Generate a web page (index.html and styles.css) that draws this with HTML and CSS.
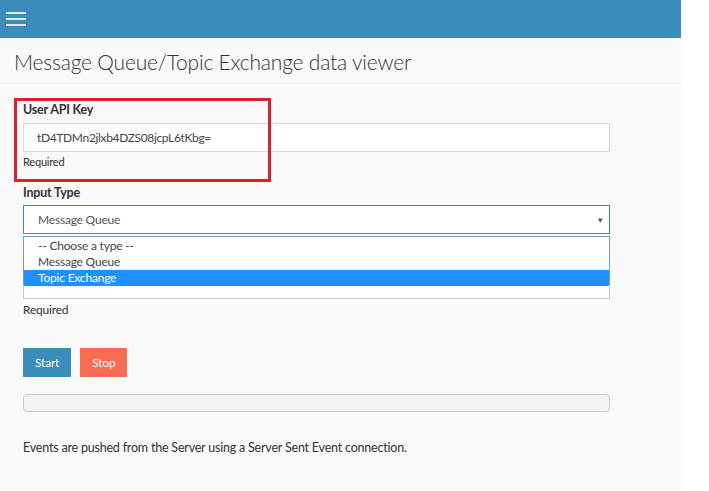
FILE: index.html
```html
<!DOCTYPE html>
<html>
<head>
<meta charset="utf-8">
<title>Message Queue/Topic Exchange data viewer</title>
<link rel="stylesheet" href="styles.css">
</head>
<body>

<div class="wrap">
<div class="top_bar">
<span class="menu_btn"><i></i><i></i><i></i></span>
</div>

<div class="pg_hdr">Message Queue/Topic Exchange data viewer</div>

<div class="pg_cnt">

<div class="frm_grp key_grp">
<label>User API Key</label>
<div class="frm_ctl key_ctl">tD4TDMn2jlxb4DZS08jcpL6tKbg=</div>
<div class="hint">Required</div>
</div>

<div class="frm_grp">
<label>Input Type</label>
<div class="frm_ctl sel_ctl">Message Queue<span class="caret">&#9662;</span></div>
<div class="sub_wrap">
<div class="frm_ctl sub_ctl"></div>
<div class="sel_list">
<div>-- Choose a type --</div>
<div>Message Queue</div>
<div class="on">Topic Exchange</div>
</div>
</div>
<div class="hint hint_lg">Required</div>
</div>

<div class="btn_row">
<span class="btn btn_start">Start</span>
<span class="btn btn_stop">Stop</span>
</div>

<div class="prog"></div>

<p class="note">Events are pushed from the Server using a Server Sent Event connection.</p>

</div>
</div>

</body>
</html>
```

FILE: styles.css
```css
html, body {margin:0;padding:0;background:#fff;}
body {font-family:Lato, "Open Sans", sans-serif;font-size:12px;letter-spacing:-0.2px;color:#333;}

.wrap {width:681px;height:491px;background:#f9f9f9;}

.top_bar {height:38px;background:#3c8dbc;display:flex;align-items:center;padding-left:6px;}
.menu_btn {display:flex;flex-direction:column;gap:4px;width:20px;margin-top:-1px;}
.menu_btn i {display:block;height:2px;background:#d6e9f5;}

.pg_hdr {height:46px;line-height:48px;padding-left:14px;font-size:21px;letter-spacing:-0.2px;font-weight:300;color:#333;border-bottom:1px solid #ececec;box-sizing:border-box;}

.pg_cnt {padding:16px 71px 0 23px;}

.frm_grp label {display:block;font-weight:bold;font-size:12.5px;line-height:20px;margin-bottom:2px;}
.key_grp label {margin-bottom:3px;}
.frm_ctl {height:29px;box-sizing:border-box;border:1px solid #d2d6de;background:#fff;padding-left:13px;line-height:27px;color:#444;}
.key_ctl {font-size:12px;letter-spacing:-0.35px;}
.hint {font-size:11px;line-height:16px;margin-top:2px;}

.key_grp {position:relative;height:83px;}
.key_grp::after {content:"";position:absolute;left:-9px;top:-2px;width:251px;height:78px;border:3px solid #d7232d;}

.sel_ctl {border-color:#3c8dbc;padding-left:14px;position:relative;color:#555;}
.sel_ctl .caret {position:absolute;right:6px;top:0;font-size:9px;color:#555;}

.sub_wrap {position:relative;margin-top:36px;}
.sub_ctl {height:29px;border-color:#ccc;}
.sel_list {position:absolute;left:0;right:0;top:-34px;height:49px;box-sizing:border-box;border:1px solid #7a9cbf;background:#fff;padding-top:1px;}
.sel_list div {height:16px;line-height:16px;padding-left:14px;color:#444;}
.sel_list div.on {background:#1e90ff;color:#fff;}

.hint_lg {font-size:12px;margin-top:2px;line-height:18px;}

.btn_row {display:flex;gap:9px;margin-top:29px;}
.btn {display:inline-block;height:29px;line-height:29px;padding:0 12px;color:#fff;}
.btn_start {background:#3c8dbc;}
.btn_stop {background:#f86c54;}

.prog {height:16px;margin-top:17px;background:#f3f3f3;border:1px solid #ccc;border-radius:4px;}

.note {margin:28px 0 0;line-height:16px;font-size:12.5px;}
```
